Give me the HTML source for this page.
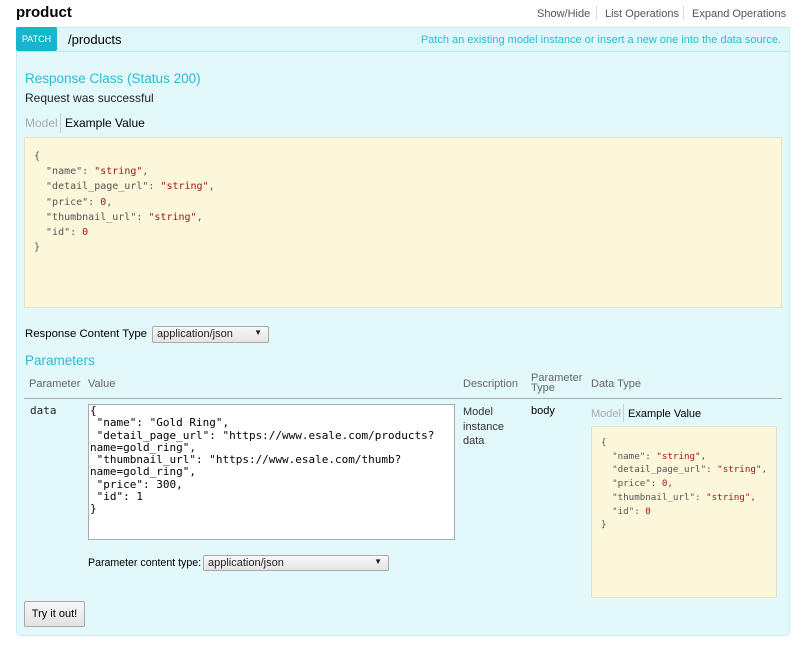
<!DOCTYPE html>
<html><head><style>
*{box-sizing:border-box;margin:0;padding:0}
body{width:800px;height:649px;background:#fff;font-family:"Liberation Sans",sans-serif;font-size:12px;color:#222;position:relative;overflow:hidden}
.a{position:absolute;white-space:nowrap}
.mono{font-family:"DejaVu Sans Mono","Liberation Mono",monospace}
.cy{color:#26bdd6}
.gray{color:#666}
.s{color:#a31515}
.n{color:#a31515}
.sel{border:1px solid #aaa;background:linear-gradient(#f8f8f8,#e4e4e4);font-size:11px;padding:1px 4px;border-radius:2px}
.sel:after{content:"▼";position:absolute;right:6px;top:1px;font-size:8px}
</style></head><body>
<div class="a" style="left:16px;top:4px;font-size:15px;font-weight:bold;color:#000">product</div>
<div class="a gray" style="left:537px;top:8px;font-size:11px;color:#555">Show/Hide</div>
<div class="a" style="left:596px;top:6px;width:1px;height:14px;background:#ddd"></div>
<div class="a" style="left:605px;top:8px;font-size:11px;color:#555">List Operations</div>
<div class="a" style="left:683px;top:6px;width:1px;height:14px;background:#ddd"></div>
<div class="a" style="left:692px;top:8px;font-size:11px;color:#555">Expand Operations</div>

<div class="a" style="left:16px;top:27px;width:774px;height:25px;background:#e0f7fa;border:1px solid #c4eef4;border-bottom:1px solid #b8e7ef"></div>
<div class="a" style="left:16px;top:27px;width:41px;height:24px;background:#18b5cf;border-radius:2px;color:#fff;font-size:9px;line-height:25px;text-align:center">PATCH</div>
<div class="a" style="left:68px;top:32px;font-size:13px;color:#000">/products</div>
<div class="a cy" style="right:19px;top:34px;font-size:11px">Patch an existing model instance or insert a new one into the data source.</div>

<div class="a" style="left:16px;top:52px;width:774px;height:584px;background:#e3f8fb;border:1px solid #c4eef4;border-top:none;border-radius:0 0 5px 5px"></div>
<div class="a cy" style="left:25px;top:71px;font-size:13.5px">Response Class (Status 200)</div>
<div class="a" style="left:25px;top:91px;font-size:12px">Request was successful</div>
<div class="a" style="left:25px;top:116px;font-size:12px;color:#aaa">Model</div>
<div class="a" style="left:60px;top:113px;width:1px;height:20px;background:#ccc"></div>
<div class="a" style="left:65px;top:116px;font-size:12px;color:#000">Example Value</div>
<div class="a mono" style="left:24px;top:137px;width:758px;height:171px;background:#fcf6db;border:1px solid #e5e0c6;font-size:10px;line-height:15.2px;padding:11px 9px;color:#555;white-space:pre">{
  "name": <span class="s">"string"</span>,
  "detail_page_url": <span class="s">"string"</span>,
  "price": <span class="n">0</span>,
  "thumbnail_url": <span class="s">"string"</span>,
  "id": <span class="n">0</span>
}</div>

<div class="a" style="left:25px;top:328px;font-size:11.4px;color:#000">Response Content Type</div>
<div class="a sel" style="left:152px;top:326px;width:117px;height:17px">application/json</div>
<div class="a cy" style="left:25px;top:353px;font-size:13.5px">Parameters</div>
<div class="a gray" style="left:29px;top:378px;font-size:11px">Parameter</div>
<div class="a gray" style="left:88px;top:378px;font-size:11px">Value</div>
<div class="a gray" style="left:463px;top:378px;font-size:11px">Description</div>
<div class="a gray" style="left:531px;top:373px;font-size:11px;line-height:10px">Parameter<br>Type</div>
<div class="a gray" style="left:591px;top:378px;font-size:11px">Data Type</div>
<div class="a" style="left:24px;top:398px;width:758px;height:1px;background:#aab"></div>

<div class="a mono" style="left:30px;top:404px;font-size:11px">data</div>
<div class="a mono" style="left:88px;top:404px;width:367px;height:136px;background:#fff;border:1px solid #aaa;font-size:11px;line-height:12.3px;padding:0 1px;white-space:pre;color:#000">{
 "name": "Gold Ring",
 "detail_page_url": "https://www.esale.com/products?
name=gold_ring",
 "thumbnail_url": "https://www.esale.com/thumb?
name=gold_ring",
 "price": 300,
 "id": 1
}</div>
<div class="a" style="left:463px;top:405px;font-size:11px;line-height:14.5px;color:#333">Model<br>instance<br>data</div>
<div class="a" style="left:531px;top:405px;font-size:11px;color:#000">body</div>
<div class="a" style="left:591px;top:408px;font-size:11px;color:#aaa">Model</div>
<div class="a" style="left:623px;top:404px;width:1px;height:18px;background:#ccc"></div>
<div class="a" style="left:628px;top:408px;font-size:11px;color:#000">Example Value</div>
<div class="a mono" style="left:591px;top:426px;width:186px;height:172px;background:#fcf6db;border:1px solid #e5e0c6;font-size:9.2px;line-height:13.7px;padding:9px 9px;color:#555;white-space:pre">{
  "name": <span class="s">"string"</span>,
  "detail_page_url": <span class="s">"string"</span>,
  "price": <span class="n">0</span>,
  "thumbnail_url": <span class="s">"string"</span>,
  "id": <span class="n">0</span>
}</div>

<div class="a" style="left:88px;top:557px;font-size:10.6px;color:#000">Parameter content type:</div>
<div class="a sel" style="left:203px;top:555px;width:186px;height:16px">application/json</div>
<div class="a" style="left:24px;top:601px;width:61px;height:26px;border:1px solid #aaa;border-radius:2px;background:linear-gradient(#f6f6f6,#e2e2e2);font-size:11px;line-height:24px;text-align:center;color:#000">Try it out!</div>
</body></html>
